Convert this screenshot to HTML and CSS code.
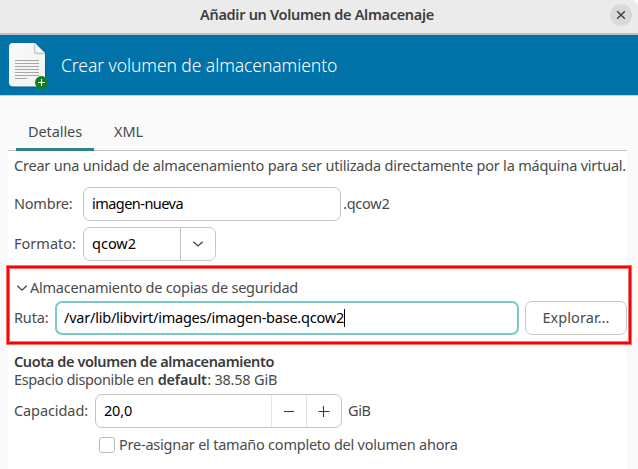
FILE: index.html
```html
<!DOCTYPE html>
<html lang="es">
<head>
<meta charset="utf-8">
<title>Añadir un Volumen de Almacenaje</title>
<link rel="stylesheet" href="styles.css">
</head>
<body>
<div class="window">
  <header class="titlebar">
    <h1 class="window-title">Añadir un Volumen de Almacenaje</h1>
    <button class="close" aria-label="Cerrar">
      <svg width="22" height="22" viewBox="0 0 22 22"><path d="M7.2 7.2l7.6 7.6M14.8 7.2l-7.6 7.6" fill="none" stroke="#3d3d3d" stroke-width="1.4"/></svg>
    </button>
  </header>
  <div class="banner">
    <svg class="doc-icon" width="42" height="52" viewBox="0 0 42 52">
      <defs><linearGradient id="paper" x1="0" y1="0" x2="1" y2="1"><stop offset="0" stop-color="#fafafa"/><stop offset="1" stop-color="#f1f1f1"/></linearGradient></defs>
      <path d="M5 4h22l10.500 10v29.500a4 4 0 0 1-4 4H5a4 4 0 0 1-4-4V8a4 4 0 0 1 4-4z" fill="#00466b" opacity=".55"/>
      <path d="M5 3h22l10 10v29.500a4 4 0 0 1-4 4H5a4 4 0 0 1-4-4V7a4 4 0 0 1 4-4z" fill="url(#paper)"/>
      <path d="M26.500 3.200v7.300a3 3 0 0 0 3 3H36.700" fill="none" stroke="#c3c3c3" stroke-width="1.300"/>
      <path d="M7 20.500h24M7 23.500h24M7 26.500h24M7 29.500h24M7 32.500h24M7 35.500h24M7 38.500h12" stroke="#a6a6a6" stroke-width="1"/>
      <circle cx="33.400" cy="42.500" r="6.400" fill="#12801a"/>
      <path d="M33.500 39v7M30 42.500h7" stroke="#fff" stroke-width="1.100"/>
    </svg>
    <h2 class="banner-title">Crear volumen de almacenamiento</h2>
  </div>
  <nav class="tabs">
    <div class="tab tab-active">Detalles</div>
    <div class="tab tab-xml">XML</div>
  </nav>
  <main class="page">
    <p class="description">Crear una unidad de almacenamiento para ser utilizada directamente por la máquina virtual.</p>
    <div class="row row-name">
      <label class="label-main name-label">Nombre:</label>
      <div class="entry name-entry">imagen-nueva</div>
      <span class="suffix">.qcow2</span>
    </div>
    <div class="row row-format">
      <label class="label-main">Formato:</label>
      <div class="entry combo">
        <span class="combo-value">qcow2</span>
        <span class="combo-arrow"><svg width="12" height="8" viewBox="0 0 12 8"><path d="M1.300 1.800L6 6l4.700-4.200" fill="none" stroke="#444" stroke-width="1.300"/></svg></span>
      </div>
    </div>
    <section class="backing">
      <div class="expander">
        <svg width="12" height="8" viewBox="0 0 12 8"><path d="M1.300 1.800L6 6.200l4.700-4.400" fill="none" stroke="#444" stroke-width="1.300"/></svg>
        <span class="expander-title">Almacenamiento de copias de seguridad</span>
      </div>
      <div class="row">
        <label class="label-path">Ruta:</label>
        <div class="entry path-entry"><span class="path">/var/lib/libvirt/images/imagen-base.qcow2</span><i class="caret"></i></div>
        <button class="browse">Explorar...</button>
      </div>
      <div class="highlight"></div>
    </section>
    <h3 class="quota-title">Cuota de volumen de almacenamiento</h3>
    <p class="available"><span class="avail-text">Espacio disponible en</span> <b>default</b><span class="avail-size">: 38.58 GiB</span></p>
    <div class="row">
      <label class="label-capacity">Capacidad:</label>
      <div class="entry spin">
        <span class="spin-value">20,0</span>
        <span class="spin-button"><svg width="12" height="12" viewBox="0 0 12 12"><path d="M1 6.500h10" stroke="#3d3d3d" stroke-width="1.100"/></svg></span>
        <span class="spin-button"><svg width="12" height="12" viewBox="0 0 12 12"><path d="M.5 6.500h11M5.500 1v11" stroke="#3d3d3d" stroke-width="1.100"/></svg></span>
      </div>
      <span class="unit">GiB</span>
    </div>
    <div class="check-row">
      <span class="checkbox"></span>
      <span class="check-label">Pre-asignar el tamaño completo del volumen ahora</span>
    </div>
  </main>
</div>
</body>
</html>
```
FILE: styles.css
```css
* { box-sizing: border-box; }
body {
  margin: 0;
  background: #fafafa;
  color: #4a4a4a;
  font: 14.5px/18px "Noto Sans", "Open Sans", sans-serif;
  letter-spacing: -0.2px;
  white-space: nowrap;
  overflow: hidden;
}
h1, h2, h3, p { margin: 0; font-size: inherit; }
button { font: inherit; color: inherit; padding: 0; }
svg { display: block; flex: none; }

.window { width: 638px; height: 469px; overflow: hidden; display: flex; flex-direction: column; }
.titlebar {
  height: 35px;
  flex: none;
  background: #ebebeb;
  border-bottom: 2px solid #bfbfc1;
  border-radius: 3px 8px 0 0;
  display: grid;
  grid-template-columns: 1fr auto 1fr;
  align-items: center;
  padding: 0 6px 3px 2px;
}
.window-title { grid-column: 2; padding-bottom: 2px; font-weight: 600; letter-spacing: -0.298px; color: #3d3d3d; }
.close { justify-self: end; width: 22px; height: 22px; border: 0; border-radius: 50%; background: #d9d9d9; }

.banner {
  height: 61px;
  flex: none;
  background: #0072a8;
  border-bottom: 1px solid #c9cfd3;
  display: flex;
  align-items: center;
  padding-left: 8px;
  gap: 11px;
}
.doc-icon { margin-top: 2px; }
.banner-title { padding-bottom: 1px; font-size: 17.5px; font-weight: 300; letter-spacing: -0.065px; color: #fff; }

.tabs {
  height: 55px;
  flex: none;
  margin: 0 11px 0 8px;
  padding-left: 8px;
  border-bottom: 1px solid #c6c6c6;
  display: flex;
  align-items: flex-end;
}
.tab { height: 37px; padding-top: 9px; letter-spacing: -0.09px; }
.tab-active { width: 78px; height: 38px; margin-bottom: -1px; border-bottom: 3px solid #2f8480; text-align: center; }
.tab-xml { padding-left: 20px; }

.page { flex: 1; margin: 0 11px 0 8px; padding: 5px 0 0 6px; background: #fff; }
.description { letter-spacing: -0.209px; }
.row { display: flex; align-items: center; }
.row-name { margin-top: 13px; }
.row-format { margin-top: 6px; }
.row label, .suffix, .unit { padding-bottom: 2px; }
.label-main { width: 69px; letter-spacing: 0.016px; }
.row .name-label { letter-spacing: -0.219px; }

.entry {
  height: 34px;
  border: 1px solid #c4c4c4;
  border-radius: 7px;
  background: #fff;
  color: #000;
  display: flex;
  align-items: center;
}
.name-entry { width: 258px; padding: 0 0 2px 8px; letter-spacing: -0.539px; }
.suffix { margin-left: 2px; letter-spacing: -0.239px; }
.combo { width: 133px; }
.combo-value { width: 96px; padding: 0 0 2px 8px; letter-spacing: 0; }
.combo-arrow { flex: 1; height: 100%; border-left: 1px solid #c4c4c4; display: flex; align-items: center; justify-content: center; }

.backing { position: relative; margin-top: 17px; }
.expander { display: flex; align-items: center; gap: 2px; padding-left: 2px; height: 20px; margin-bottom: 3px; }
.expander-title { padding-bottom: 2px; letter-spacing: -0.238px; }
.label-path { width: 41px; letter-spacing: -0.147px; }
.path-entry { width: 464px; border: 2px solid #7acac6; padding-left: 7px; }
.path { padding-bottom: 2px; letter-spacing: -0.221px; }
.caret { width: 1px; height: 18px; background: #000; }
.browse {
  width: 102px;
  height: 34px;
  margin-left: 6px;
  padding-bottom: 2px;
  border: 1px solid #c8c8c8;
  border-radius: 7px;
  background: #fff;
  letter-spacing: 0.062px;
}
.highlight {
  position: absolute;
  left: -7px;
  top: -12px;
  width: 624px;
  height: 78px;
  border: 2px solid #f00;
  box-shadow: 0 0 0 1px #ff000090, inset 0 0 0 1px #ff000090;
}

.quota-title { margin-top: 17px; font-weight: 600; letter-spacing: -0.382px; color: #3a3a3a; }
.available { margin-bottom: 6px; }
.available b { font-weight: 600; letter-spacing: -0.238px; color: #3a3a3a; margin: 0 0.5px 0 0.3px; }
.avail-text { letter-spacing: -0.355px; margin-right: 0.2px; }
.avail-size { letter-spacing: -0.201px; }
.label-capacity { width: 81px; letter-spacing: -0.091px; }
.spin { width: 247px; }
.spin-value { flex: 1; padding: 0 0 2px 8px; letter-spacing: -0.192px; }
.spin-button { width: 35px; height: 100%; border-left: 1px solid #e4e4e4; display: flex; align-items: center; justify-content: center; }
.unit { margin-left: 6px; letter-spacing: -0.407px; }
.check-row { display: flex; align-items: center; margin: 7px 0 0 85px; gap: 4px; height: 20px; }
.checkbox { width: 16px; height: 16px; border: 1px solid #bababa; border-radius: 3px; }
.check-label { padding-bottom: 2px; letter-spacing: -0.23px; }
```
